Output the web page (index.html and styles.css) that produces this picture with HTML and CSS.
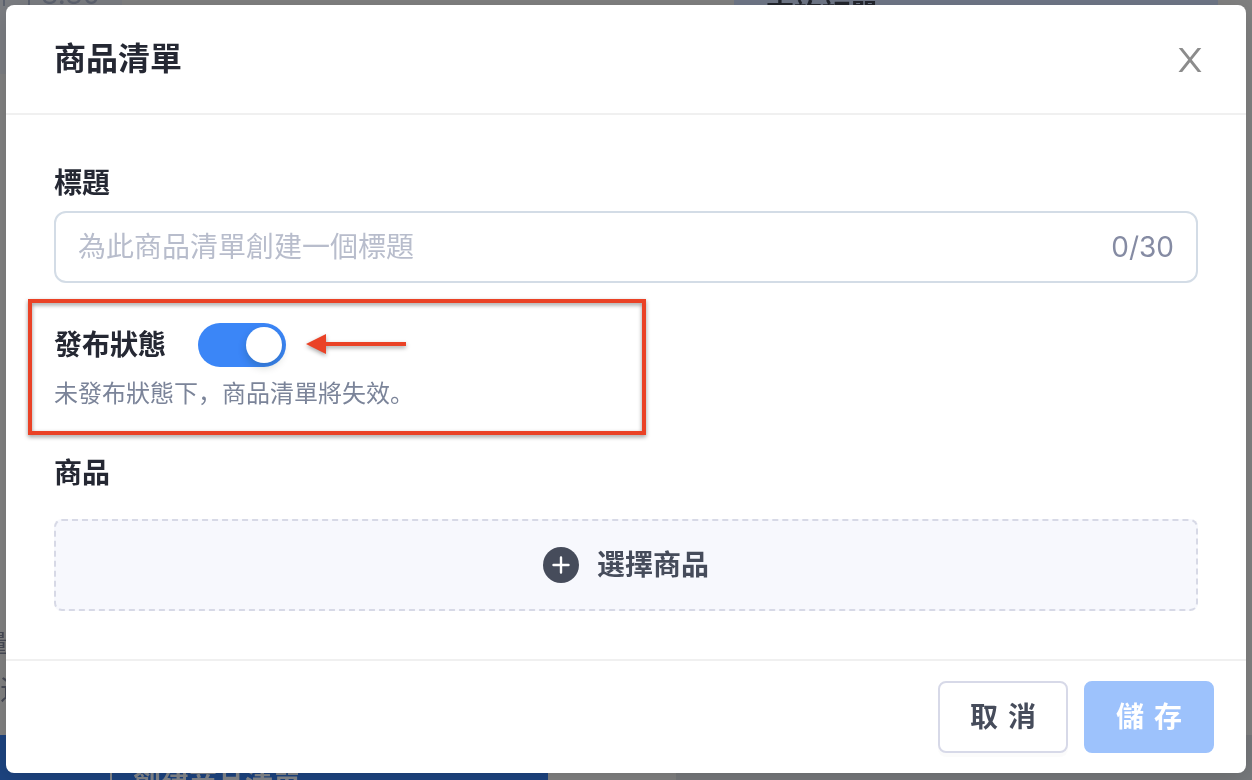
FILE: index.html
```html
<!DOCTYPE html>
<html lang="zh-Hans">
<head>
    <meta charset="UTF-8">
    <meta name="viewport" content="width=device-width, initial-scale=1.0">
    <title>商品清單</title>
    <link rel="stylesheet" href="styles.css">
</head>
<body>
    <!-- Page behind the modal -->
    <div class="page" aria-hidden="true">
        <div class="page-top">
            <div class="price-box"><span class="tick"></span><span class="tick"></span><span class="price">8.80</span></div>
            <div class="order-box">查詢訂單 ›</div>
        </div>
        <div class="page-side">
            <div class="side-text side-end">量</div>
            <div class="side-text">這</div>
        </div>
        <div class="page-bottom">
            <div class="create-bar">
                <svg width="20" height="20" viewBox="0 0 20 20">
                    <path d="M10 0v20M0 10h20" stroke="#85888c" stroke-width="2"/>
                </svg>
                創建商品清單
            </div>
            <div class="page-panel"></div>
        </div>
    </div>

    <!-- Modal -->
    <div class="overlay">
        <form class="modal" role="dialog" aria-labelledby="modalTitle">
            <div class="modal-header">
                <h1 class="modal-title" id="modalTitle">商品清單</h1>
                <button class="close-button" type="button" aria-label="關閉">
                    <svg width="24" height="24" viewBox="0 0 24 24" fill="#8c8c8c">
                        <path d="M.7 0h3.7L12 9.6 19.6 0h3.7l-9.5 11.8L23.5 24h-3.7L12 14.2 4.2 24H.5l9.7-12.2z"/>
                    </svg>
                </button>
            </div>

            <div class="modal-body">
                <label class="label" for="listTitle">標題</label>
                <div class="input-box">
                    <input id="listTitle" type="text" maxlength="30" placeholder="為此商品清單創建一個標題">
                    <span class="count">0/30</span>
                </div>

                <div class="status">
                    <div class="status-row">
                        <label class="label" for="published">發布狀態</label>
                        <input class="switch" id="published" type="checkbox" role="switch" checked>
                        <svg class="arrow" width="104" height="28" viewBox="0 0 104 28" fill="#ea4226">
                            <path d="M0 13 20 3v8h80v4H20v8z"/>
                        </svg>
                    </div>
                    <p class="hint">未發布狀態下，商品清單將失效。</p>
                    <div class="highlight"></div>
                </div>

                <h2 class="label">商品</h2>
                <button class="select-button" type="button">
                    <svg width="36" height="36" viewBox="0 0 36 36">
                        <circle cx="18" cy="18" r="18" fill="#464c5b"/>
                        <path d="M18 10.5v15M10.5 18h15" stroke="#fff" stroke-width="2.4" stroke-linecap="round"/>
                    </svg>
                    選擇商品
                </button>
            </div>

            <div class="modal-footer">
                <button class="button" type="button"><span>取</span> <span>消</span></button>
                <button class="button primary" type="submit" disabled><span>儲</span> <span>存</span></button>
            </div>
        </form>
    </div>
</body>
</html>
```
FILE: styles.css
```css
* {
    box-sizing: border-box;
}

body {
    margin: 0;
    background: #828282;
    color: #252833;
    font-family: Inter, 'Noto Sans CJK SC', sans-serif;
    font-size: 28px;
    line-height: 40px;
}

button,
input {
    margin: 0;
    font: inherit;
}

/* Page behind the modal */
.page {
    position: fixed;
    inset: 0;
    display: flex;
    flex-direction: column;
    overflow: hidden;
}

.page-top {
    display: flex;
    justify-content: space-between;
    padding-right: 34px;
}

.price-box {
    display: flex;
    width: 122px;
    height: 74px;
    padding-left: 3px;
    background: #7c7e83;
    color: #5e6370;
}

.tick {
    width: 2px;
    height: 6px;
    margin-right: 23px;
    background: #5e6370;
}

.price {
    margin-top: -26px;
    margin-left: -12px;
}

.order-box {
    width: 484px;
    height: 74px;
    padding-left: 32px;
    background: #707888;
    color: #23262e;
    font-weight: 600;
    line-height: 28px;
}

.page-side {
    flex: 1;
    display: flex;
    flex-direction: column;
    justify-content: flex-end;
    padding-bottom: 22px;
}

.side-text {
    width: 32px;
    color: #484b57;
    line-height: 46px;
}

.side-end {
    margin-left: -16px;
    font-size: 24px;
}

.page-bottom {
    display: flex;
    flex: none;
    height: 45px;
}

.create-bar {
    display: flex;
    gap: 12px;
    width: 548px;
    padding-left: 101px;
    padding-top: 28px;
    overflow: hidden;
    background: #1d4480;
    color: #85888c;
    font-weight: 600;
}

.create-bar svg {
    flex: none;
    margin-top: 9px;
}

.page-panel {
    flex: 1;
    margin-left: 128px;
    background: #77797c;
}

/* Modal */
.overlay {
    position: relative;
    padding: 5px 6px 7px;
}

.modal {
    background: white;
    border-radius: 8px;
    box-shadow: 0 4px 24px rgba(0, 0, 0, 0.15);
}

.modal-header {
    display: flex;
    justify-content: space-between;
    align-items: center;
    padding: 30px 44px 30px 48px;
    border-bottom: 2px solid #f0f0f0;
}

.modal-title {
    margin: 0;
    font-size: 32px;
    font-weight: 600;
    line-height: 48px;
}

.close-button {
    display: flex;
    padding: 2px 0 0;
    border: none;
    background: none;
    cursor: pointer;
}

.modal-body {
    padding: 48px;
}

.label {
    display: block;
    margin: 0;
    font-size: 28px;
    font-weight: 600;
}

.input-box {
    display: flex;
    align-items: center;
    height: 72px;
    margin-top: 8px;
    padding: 0 22px;
    border: 2px solid #d3dce6;
    border-radius: 12px;
}

.input-box input {
    flex: 1;
    min-width: 0;
    padding: 0;
    border: none;
    outline: none;
    background: none;
}

.input-box input::placeholder {
    color: #b8bdcc;
}

.count {
    color: #858ba3;
}

.status {
    position: relative;
    margin: 40px 0;
}

.status-row {
    display: flex;
    align-items: center;
}

.switch {
    appearance: none;
    display: flex;
    justify-content: flex-end;
    width: 88px;
    height: 44px;
    margin-left: 32px;
    padding: 4px;
    border-radius: 22px;
    background: #3b86f7;
    cursor: pointer;
}

.switch::before {
    content: '';
    width: 36px;
    height: 36px;
    border-radius: 50%;
    background: white;
    box-shadow: 0 4px 8px rgba(0, 35, 11, 0.2);
}

.switch:not(:checked) {
    justify-content: flex-start;
    background: #bfbfbf;
}

.arrow {
    margin-left: 20px;
    filter: drop-shadow(0 2px 2px rgba(0, 0, 0, 0.35));
}

.hint {
    margin: 8px 0 0;
    color: #7b8499;
    font-size: 24px;
    line-height: 38px;
}

.highlight {
    position: absolute;
    top: -24px;
    bottom: -22px;
    left: -26px;
    width: 54%;
    border: 4px solid #ea4226;
    filter: drop-shadow(0 2px 2px rgba(0, 0, 0, 0.4));
    pointer-events: none;
}

.select-button {
    display: flex;
    justify-content: center;
    align-items: center;
    gap: 18px;
    width: 100%;
    height: 92px;
    margin-top: 26px;
    border: 2px dashed #d7d9e6;
    border-radius: 8px;
    background: #f7f8fd;
    color: #464c5b;
    font-weight: 600;
    cursor: pointer;
}

.modal-footer {
    display: flex;
    justify-content: flex-end;
    gap: 16px;
    padding: 20px 32px;
    border-top: 2px solid #f0f0f0;
}

.button {
    display: flex;
    justify-content: center;
    align-items: center;
    gap: 10px;
    height: 72px;
    padding: 0 30px;
    border: 2px solid #d7d9e8;
    border-radius: 8px;
    background: white;
    box-shadow: 0 4px 0 rgba(0, 0, 0, 0.015);
    color: #464c5b;
    font-weight: 600;
    cursor: pointer;
}

.primary {
    border-color: #9dc2fc;
    background: #9dc2fc;
    box-shadow: none;
    color: white;
}
```
